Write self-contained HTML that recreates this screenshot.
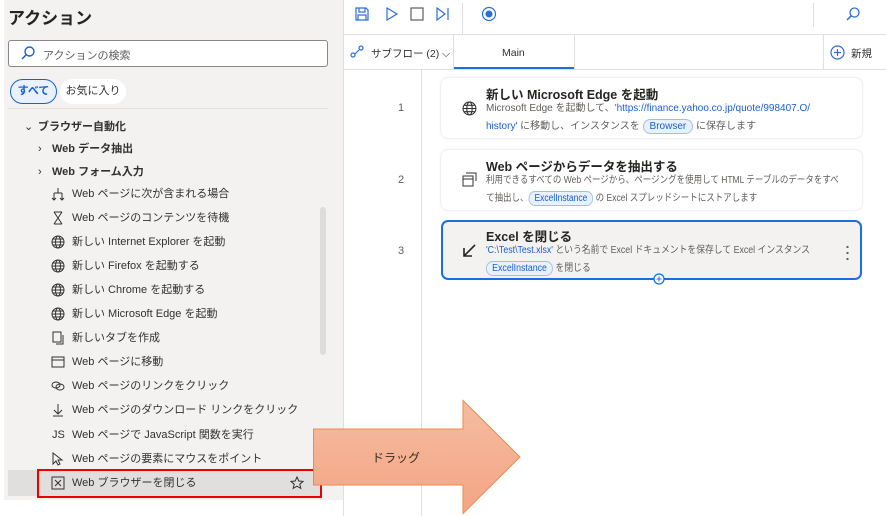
<!DOCTYPE html>
<html><head><meta charset="utf-8"><style>
*{margin:0;padding:0;box-sizing:border-box}
body{width:886px;height:516px;background:#fff;font-family:"Liberation Sans","Noto Sans CJK JP",sans-serif;position:relative;overflow:hidden;color:#323130}
.abs{position:absolute}
#left{left:4px;top:0;width:339px;height:500px;background:#f3f2f1}
.item{position:absolute;font-size:11px;color:#323130;white-space:nowrap;line-height:14px}
.ic{position:absolute;left:51px;width:14px;height:14px}
.card{position:absolute;left:441px;width:421px;height:60px;background:#fff;border-radius:7px;box-shadow:0 0 2px rgba(0,0,0,.18)}
.card .t{position:absolute;left:45px;top:6px;font-size:12.5px;font-weight:bold;color:#252423;white-space:nowrap}
.card .d{position:absolute;left:45px;top:22px;font-size:10px;line-height:18px;color:#605e5c;white-space:nowrap;transform-origin:0 0}
.lnk{color:#1a5fd0}
.pill{display:inline-block;border:1px solid #9ebfee;background:#e8f1fc;color:#1a5fd0;border-radius:9px;padding:0 6px;line-height:13px}
.num{position:absolute;left:398px;font-size:11px;color:#605e5c}
</style></head><body>
<div id="left" class="abs"></div>
<div class="abs" style="left:8px;top:4px;font-size:17px;font-weight:bold;color:#252423">アクション</div>
<div class="abs" style="left:8px;top:40px;width:320px;height:27px;border:1px solid #8a8886;border-radius:3px;background:#fff"></div>
<svg class="abs" style="left:20px;top:45px" width="16" height="16" viewBox="0 0 16 16"><circle cx="9.5" cy="6.5" r="4.5" fill="none" stroke="#1a5fd0" stroke-width="1.4"/><path d="M6.3 9.7L2 14" stroke="#1a5fd0" stroke-width="1.5"/></svg>
<div class="abs" style="left:43px;top:47px;font-size:11px;color:#605e5c">アクションの検索</div>
<div class="abs" style="left:10px;top:79px;width:47px;height:25px;border:1.5px solid #1a5fd0;border-radius:13px;background:#e8f1fc;font-size:11px;color:#1a5fd0;font-weight:bold;text-align:center;line-height:22px">すべて</div>
<div class="abs" style="left:60px;top:79px;width:66px;height:25px;border-radius:13px;background:#fff;font-size:11px;color:#323130;text-align:center;line-height:25px">お気に入り</div>
<div class="abs" style="left:8px;top:108px;width:320px;height:1px;background:#e1dfdd"></div>
<div class="abs" style="left:320px;top:207px;width:6px;height:148px;background:#dcdcdc;border-radius:3px"></div>

<div class="item" style="left:24px;top:120px">⌄</div>
<div class="item" style="left:38px;top:120px;font-weight:bold">ブラウザー自動化</div>
<div class="item" style="left:38px;top:142px">›</div>
<div class="item" style="left:52px;top:142px;font-weight:bold">Web データ抽出</div>
<div class="item" style="left:38px;top:165px">›</div>
<div class="item" style="left:52px;top:165px;font-weight:bold">Web フォーム入力</div>

<svg class="ic" style="top:187px" viewBox="0 0 14 14"><path d="M7 1v5M3 6h8M3 6v7M11 6v7M1 11l2 2 2-2M9 11l2 2 2-2" fill="none" stroke="#323130"/></svg>
<div class="item" style="left:72px;top:187px">Web ページに次が含まれる場合</div>
<svg class="ic" style="top:211px" viewBox="0 0 14 14"><path d="M3 1h8M3 13h8M3 1l8 12M11 1L3 13" fill="none" stroke="#323130"/></svg>
<div class="item" style="left:72px;top:211px">Web ページのコンテンツを待機</div>
<svg class="ic" style="top:235px" viewBox="0 0 14 14"><g fill="none" stroke="#323130"><circle cx="7" cy="7" r="6"/><ellipse cx="7" cy="7" rx="2.5" ry="6"/><path d="M1 7h12M2 4h10M2 10h10"/></g></svg>
<div class="item" style="left:72px;top:235px">新しい Internet Explorer を起動</div>
<svg class="ic" style="top:259px" viewBox="0 0 14 14"><g fill="none" stroke="#323130"><circle cx="7" cy="7" r="6"/><ellipse cx="7" cy="7" rx="2.5" ry="6"/><path d="M1 7h12M2 4h10M2 10h10"/></g></svg>
<div class="item" style="left:72px;top:259px">新しい Firefox を起動する</div>
<svg class="ic" style="top:283px" viewBox="0 0 14 14"><g fill="none" stroke="#323130"><circle cx="7" cy="7" r="6"/><ellipse cx="7" cy="7" rx="2.5" ry="6"/><path d="M1 7h12M2 4h10M2 10h10"/></g></svg>
<div class="item" style="left:72px;top:283px">新しい Chrome を起動する</div>
<svg class="ic" style="top:307px" viewBox="0 0 14 14"><g fill="none" stroke="#323130"><circle cx="7" cy="7" r="6"/><ellipse cx="7" cy="7" rx="2.5" ry="6"/><path d="M1 7h12M2 4h10M2 10h10"/></g></svg>
<div class="item" style="left:72px;top:307px">新しい Microsoft Edge を起動</div>
<svg class="ic" style="top:331px" viewBox="0 0 14 14"><path d="M2 1h8v10H2zM12 4v9H5" fill="none" stroke="#323130"/></svg>
<div class="item" style="left:72px;top:331px">新しいタブを作成</div>
<svg class="ic" style="top:355px" viewBox="0 0 14 14"><path d="M1 2h12v10H1zM1 5h12" fill="none" stroke="#323130"/></svg>
<div class="item" style="left:72px;top:355px">Web ページに移動</div>
<svg class="ic" style="top:379px" viewBox="0 0 14 14"><g fill="none" stroke="#323130"><ellipse cx="5" cy="6" rx="4" ry="3"/><ellipse cx="9" cy="8" rx="4" ry="3"/></g></svg>
<div class="item" style="left:72px;top:379px">Web ページのリンクをクリック</div>
<svg class="ic" style="top:403px" viewBox="0 0 14 14"><path d="M7 1v10M3 7l4 4 4-4M2 13h10" fill="none" stroke="#323130"/></svg>
<div class="item" style="left:72px;top:403px">Web ページのダウンロード リンクをクリック</div>
<div class="item" style="left:52px;top:428px">JS</div>
<div class="item" style="left:72px;top:428px">Web ページで JavaScript 関数を実行</div>
<svg class="ic" style="top:452px" viewBox="0 0 14 14"><path d="M2 1v11l3-3 2 4 2-1-2-4h4z" fill="none" stroke="#323130"/></svg>
<div class="item" style="left:72px;top:452px">Web ページの要素にマウスをポイント</div>

<div class="abs" style="left:8px;top:470px;width:312px;height:26px;background:#e1dfdd"></div>
<div class="abs" style="left:37px;top:469px;width:285px;height:29px;border:2.5px solid #e00"></div>
<svg class="ic" style="top:476px" viewBox="0 0 14 14"><path d="M1 1h12v12H1zM4 4l6 6M10 4l-6 6" fill="none" stroke="#323130"/></svg>
<div class="item" style="left:72px;top:476px">Web ブラウザーを閉じる</div>
<svg class="abs" style="left:290px;top:476px" width="14" height="14" viewBox="0 0 14 14"><path d="M7 1l1.8 4 4.2.4-3.2 2.8 1 4.2L7 10.2 3.2 12.4l1-4.2L1 5.4 5.2 5z" fill="none" stroke="#323130"/></svg>

<!-- toolbar -->
<div class="abs" style="left:343px;top:0;width:1px;height:516px;background:#e1dfdd"></div>
<div class="abs" style="left:343px;top:34px;width:543px;height:1px;background:#e1dfdd"></div>
<div class="abs" style="left:343px;top:69px;width:543px;height:1px;background:#e1dfdd"></div>
<div class="abs" style="left:462px;top:3px;width:1px;height:31px;background:#e1dfdd"></div>
<div class="abs" style="left:813px;top:3px;width:1px;height:24px;background:#e1dfdd"></div>
<svg class="abs" style="left:355px;top:7px" width="14" height="14" viewBox="0 0 14 14"><path d="M1 1h10l2 2v10H1zM4 1v4h6V1M3 13V8h8v5" fill="none" stroke="#2b6fd6" stroke-width="1.2"/></svg>
<svg class="abs" style="left:385px;top:7px" width="14" height="14" viewBox="0 0 14 14"><path d="M2 1l10 6-10 6z" fill="none" stroke="#2b6fd6" stroke-width="1.2"/></svg>
<svg class="abs" style="left:410px;top:7px" width="14" height="14" viewBox="0 0 14 14"><rect x="1" y="1" width="12" height="12" fill="none" stroke="#605e5c" stroke-width="1.2"/></svg>
<svg class="abs" style="left:436px;top:7px" width="14" height="14" viewBox="0 0 14 14"><path d="M1 1l8 6-8 6zM12 1v12" fill="none" stroke="#2b6fd6" stroke-width="1.2"/></svg>
<svg class="abs" style="left:481px;top:6px" width="16" height="16" viewBox="0 0 16 16"><circle cx="8" cy="8" r="6.5" fill="none" stroke="#2b6fd6" stroke-width="1.2"/><circle cx="8" cy="8" r="3.5" fill="#2b6fd6"/></svg>
<svg class="abs" style="left:845px;top:6px" width="16" height="16" viewBox="0 0 16 16"><circle cx="9.5" cy="6.5" r="4.5" fill="none" stroke="#2b6fd6" stroke-width="1.3"/><path d="M6.3 9.7L2 14" stroke="#2b6fd6" stroke-width="1.5"/></svg>
<!-- tabs -->
<svg class="abs" style="left:350px;top:45px" width="14" height="14" viewBox="0 0 14 14"><g fill="none" stroke="#2b6fd6" stroke-width="1.2"><circle cx="3" cy="10" r="2"/><circle cx="11" cy="3" r="2"/><path d="M5 9l4-4"/></g></svg>
<div class="abs" style="left:371px;top:46px;font-size:10.5px;color:#323130">サブフロー (2) ⌵</div>
<div class="abs" style="left:453px;top:35px;width:1px;height:34px;background:#e1dfdd"></div>
<div class="abs" style="left:574px;top:35px;width:1px;height:34px;background:#e1dfdd"></div>
<div class="abs" style="left:454px;top:67px;width:120px;height:2px;background:#1a6fe0"></div>
<div class="abs" style="left:502px;top:47px;font-size:10.5px;color:#323130">Main</div>
<div class="abs" style="left:823px;top:35px;width:1px;height:34px;background:#e1dfdd"></div>
<svg class="abs" style="left:830px;top:45px" width="15" height="15" viewBox="0 0 15 15"><circle cx="7.5" cy="7.5" r="6.5" fill="none" stroke="#2b6fd6" stroke-width="1.2"/><path d="M7.5 4v7M4 7.5h7" stroke="#2b6fd6" stroke-width="1.2"/></svg>
<div class="abs" style="left:851px;top:46px;font-size:10.5px;color:#323130">新規</div>
<div class="abs" style="left:421px;top:70px;width:1px;height:446px;background:#e1dfdd"></div>

<div class="num" style="top:102px">1</div>
<div class="num" style="top:174px">2</div>
<div class="num" style="top:245px">3</div>

<div class="card" style="top:78px">
<svg class="abs" style="left:21px;top:23px" width="15" height="15" viewBox="0 0 14 14"><g fill="none" stroke="#323130"><circle cx="7" cy="7" r="6"/><ellipse cx="7" cy="7" rx="2.5" ry="6"/><path d="M1 7h12M2 4h10M2 10h10"/></g></svg>
<div class="t">新しい Microsoft Edge を起動</div>
<div class="d">Microsoft Edge を起動して、<span class="lnk">'https://finance.yahoo.co.jp/quote/998407.O/</span><br><span class="lnk">history'</span> に移動し、インスタンスを <span class="pill">Browser</span> に保存します</div>
</div>
<div class="card" style="top:150px">
<svg class="abs" style="left:21px;top:22px" width="15" height="15" viewBox="0 0 15 15"><path d="M4 1h10v8M1 4h10v10H1zM1 7h10" fill="none" stroke="#323130"/></svg>
<div class="t">Web ページからデータを抽出する</div>
<div class="d" style="transform:scaleX(0.85)">利用できるすべての Web ページから、ページングを使用して HTML テーブルのデータをすべ<br>て抽出し、<span class="pill">ExcelInstance</span> の Excel スプレッドシートにストアします</div>
</div>
<div class="card" style="top:220px;background:#f3f2f1;border:2px solid #1a6fe0;box-shadow:none">
<svg class="abs" style="left:19px;top:21px" width="15" height="15" viewBox="0 0 15 15"><path d="M13 2L2 13M2 5v8h8" fill="none" stroke="#252423" stroke-width="1.6"/></svg>
<div class="t" style="left:43px;top:4px">Excel を閉じる</div>
<div class="d" style="left:43px;top:20px;transform:scaleX(0.88)"><span class="lnk">'C:\Test\Test.xlsx'</span> という名前で Excel ドキュメントを保存して Excel インスタンス<br><span class="pill">ExcelInstance</span> を閉じる</div>
<div class="abs" style="left:403px;top:22px;width:3px;height:16px;background:radial-gradient(circle,#605e5c 1px,transparent 1.3px) 0 0/3px 6px repeat-y"></div>
</div>
<svg class="abs" style="left:652px;top:272px" width="14" height="14" viewBox="0 0 14 14"><circle cx="7" cy="7" r="5" fill="#fff" stroke="#1a6fe0" stroke-width="1.3"/><path d="M7 4.5v5M4.5 7h5" stroke="#1a6fe0"/></svg>

<!-- arrow -->
<svg class="abs" style="left:312px;top:399px" width="212" height="116" viewBox="0 0 212 116"><defs><linearGradient id="g" x1="0" y1="0" x2="0" y2="1"><stop offset="0" stop-color="#f5bca0"/><stop offset="1" stop-color="#f4a584"/></linearGradient></defs><path d="M1.5 30H151V1.5L208 58 151 114.5V86H1.5z" fill="url(#g)" stroke="#ed8a4e" stroke-width="1"/></svg>
<div class="abs" style="left:372px;top:449px;font-size:12px;color:#3b2a20">ドラッグ</div>
</body></html>
